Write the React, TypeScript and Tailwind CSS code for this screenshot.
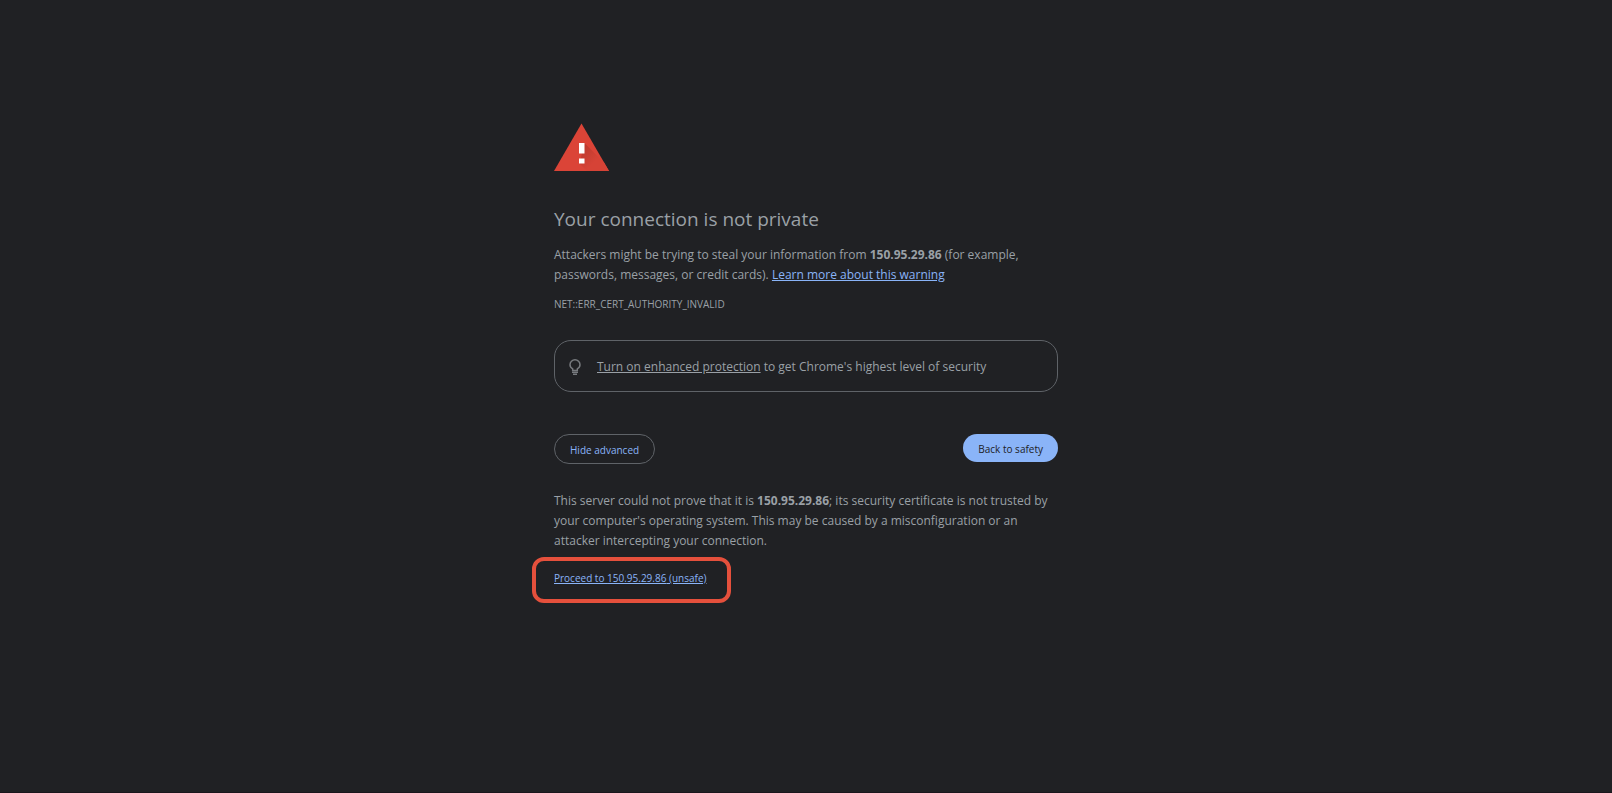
function WarningIcon() {
  return (
    <svg viewBox="0 0 56 48" className="h-12 w-14" role="img" aria-label="Warning">
      <defs>
        <linearGradient id="shade" x1="27" y1="28" x2="42" y2="43" gradientUnits="userSpaceOnUse">
          <stop offset="0" stopColor="#bf3b2f" />
          <stop offset="0.8" stopColor="#d64336" />
        </linearGradient>
      </defs>
      <path d="M0 48 27.500 0.500 55 48Z" fill="#db4437" />
      <path d="M30.500 20 50.200 39.700 55 48H33L25.500 40.500Z" fill="url(#shade)" />
      <path d="M25 20h5.500v10.500H25zM25 35.500h5.500v5H25z" fill="#fff" />
    </svg>
  );
}

function BulbIcon() {
  return (
    <svg viewBox="0 0 12 17" className="h-[17px] w-3 shrink-0" fill="none" stroke="#777a7e" strokeWidth="1.5" aria-hidden="true">
      <path d="M3.700 11.500V9.900C2 9 1 7.500 1 5.800a5 5 0 0 1 10 0c0 1.700-1 3.200-2.700 4.100v1.600z" />
      <path d="M3 13.250h6M4 15.250h4" />
    </svg>
  );
}

const HOST = "150.95.29.86";

export default function App() {
  return (
    <div className="min-h-screen border-b border-[#1a161c] bg-[#202124] px-6 pt-[123px] font-['Open_Sans','Noto_Sans',sans-serif] text-[12px] leading-5 text-[#9aa0a6]">
      <main className="mx-auto w-full max-w-[504px]">
        <WarningIcon />
        <h1 className="mt-8 text-[19px] leading-8">Your connection is not private</h1>
        <p className="mt-2.5">
          Attackers might be trying to steal your information from <strong className="font-bold">{HOST}</strong> (for
          example,
          <br />
          passwords, messages, or credit cards).{" "}
          <a href="#learn" className="text-[#8ab4f8] underline">Learn more about this warning</a>
        </p>
        <p className="mt-[9px] text-[10px]">NET::ERR_CERT_AUTHORITY_INVALID</p>

        <div className="mt-[26px] flex items-center gap-4 rounded-[17px] border border-[#5f6368] px-3.5 pb-3.5 pt-4">
          <BulbIcon />
          <p>
            <a href="#protection" className="underline">Turn on enhanced protection</a> to get Chrome's highest level of
            security
          </p>
        </div>

        <div className="mt-[42px] flex items-start justify-between text-[10px]">
          <button type="button" className="h-[30px] rounded-full border border-[#5f6368] px-[15px] pt-px text-[#8ab4f8]">
            Hide advanced
          </button>
          <button type="button" className="h-7 rounded-full bg-[#8ab4f8] px-[15px] pt-px text-[#202124]">
            Back to safety
          </button>
        </div>

        <p className="mt-[27px]">
          This server could not prove that it is <strong className="font-bold">{HOST}</strong>; its security certificate
          is not trusted by your computer's operating system. This may be caused by a misconfiguration or an
          <br />
          attacker intercepting your connection.
        </p>
        <div className="-ml-[22px] mt-1.5 flex h-[46px] w-[199px] items-start rounded-xl border-4 border-[#e5503c] pl-[18px] pt-[7px]">
          <a href="#proceed" className="whitespace-nowrap text-[10px] text-[#8ab4f8] underline">
            Proceed to {HOST} (unsafe)
          </a>
        </div>
      </main>
    </div>
  );
}
